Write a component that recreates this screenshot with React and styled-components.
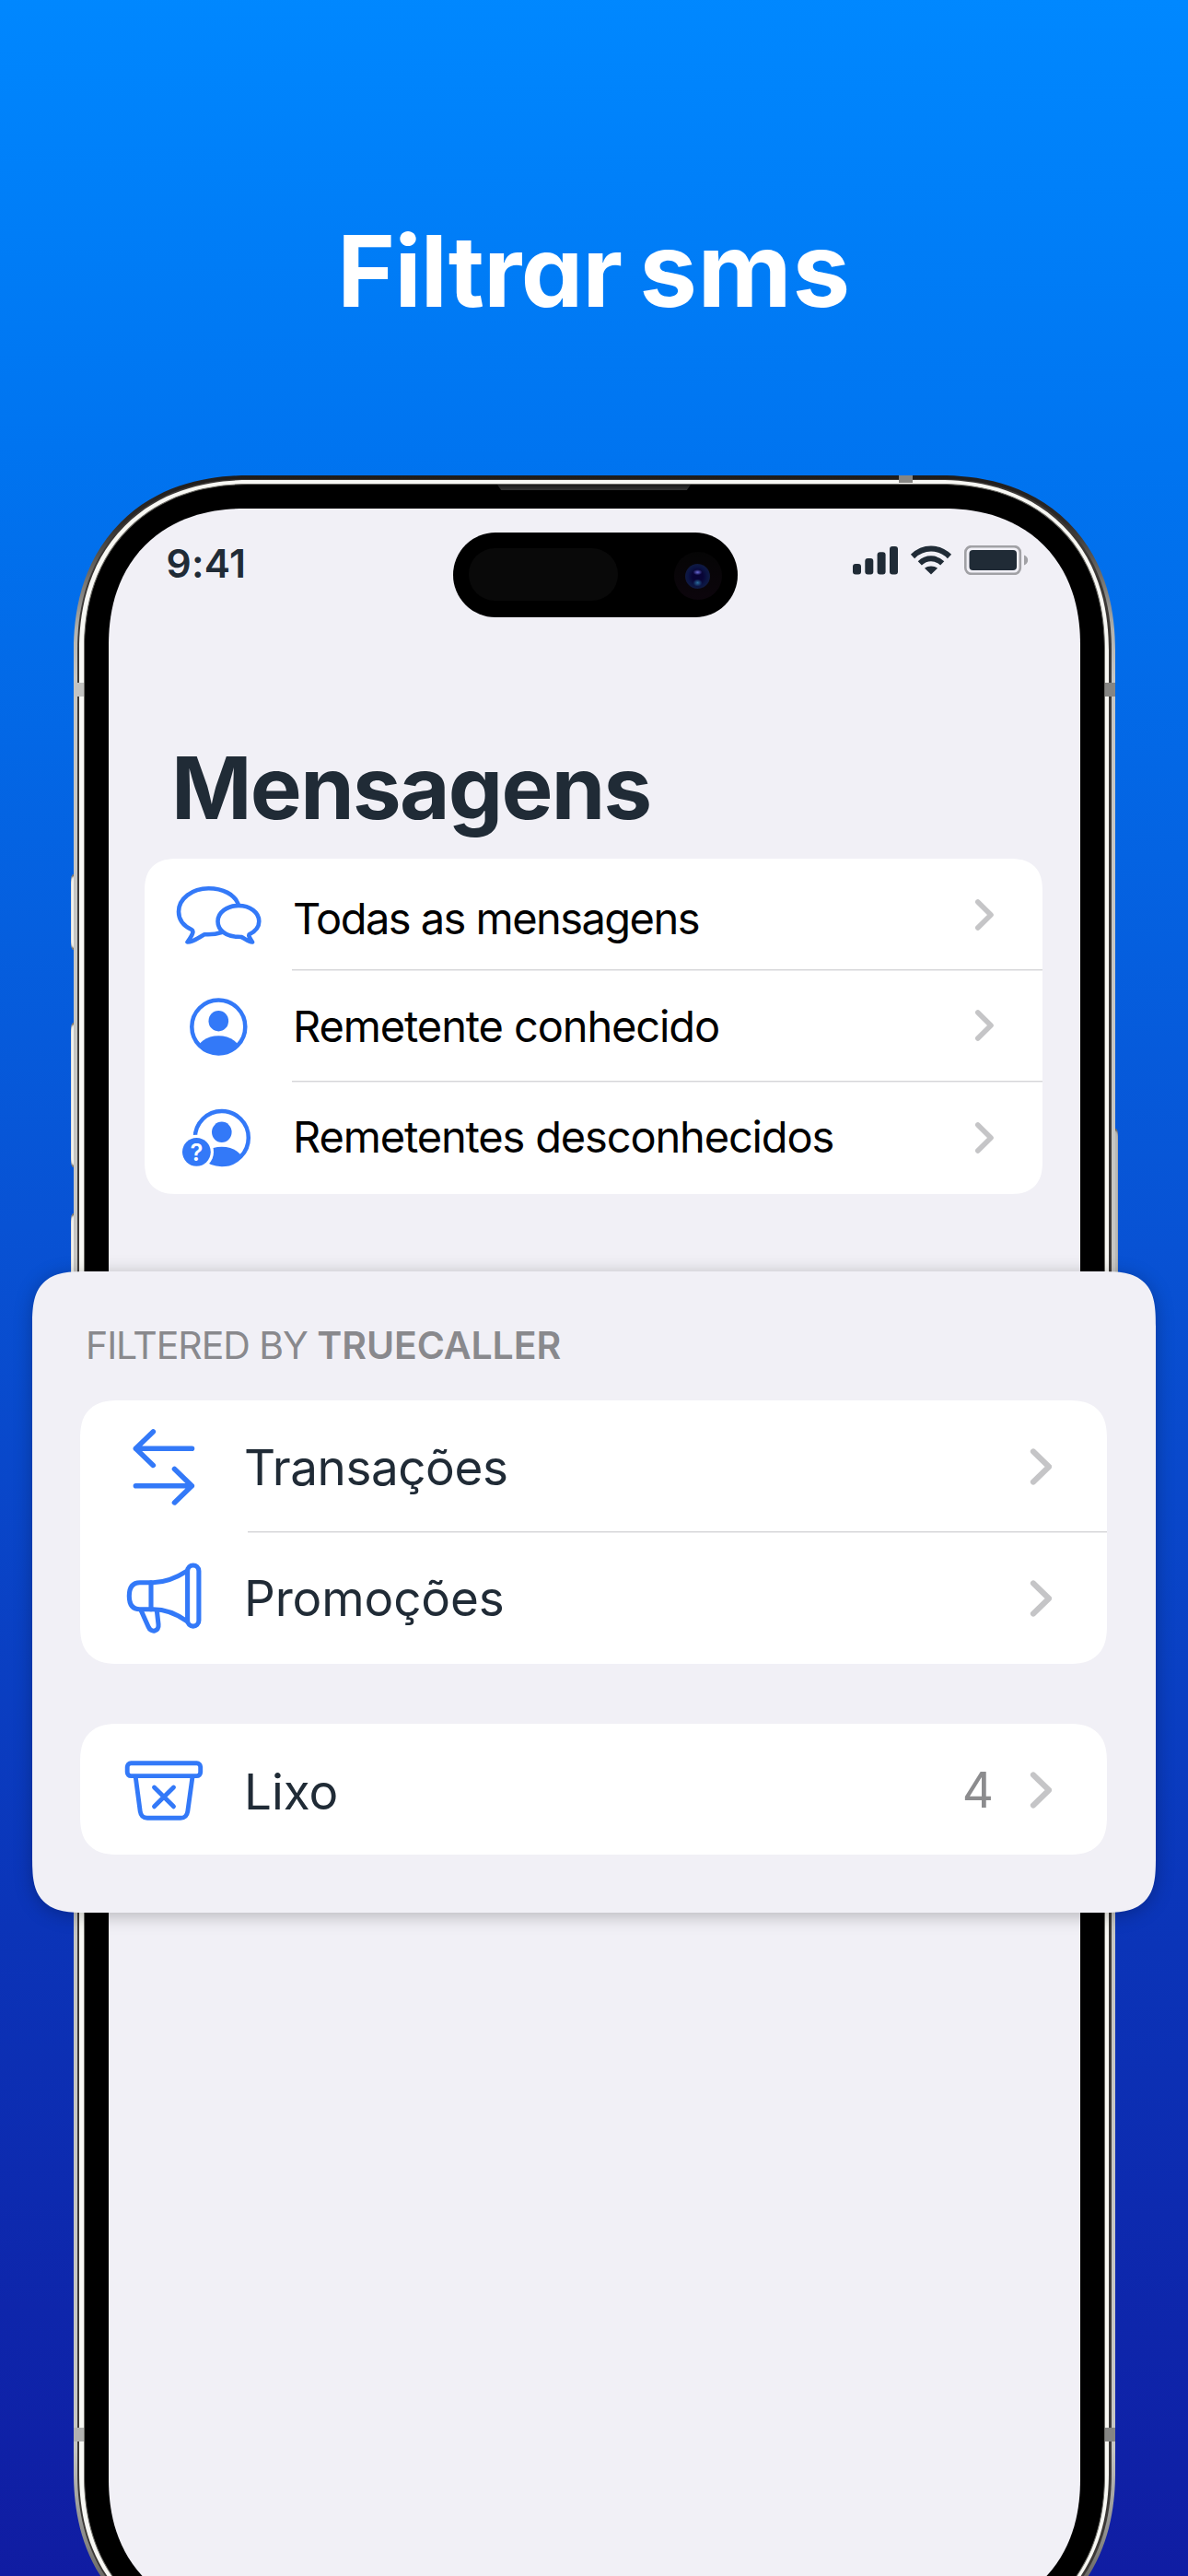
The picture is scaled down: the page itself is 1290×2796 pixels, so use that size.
import React from 'react';
import styled, { createGlobalStyle } from 'styled-components';

const GlobalStyle = createGlobalStyle`
    body {
        margin: 0;
        font-family: Inter, "Liberation Sans", sans-serif;
    }
`;

const Page = styled.div`
    position: relative;
    width: 1290px;
    height: 2796px;
    overflow: hidden;
    background: linear-gradient(181deg, #0088ff 0%, #0074f0 18%, #0852d4 48%, #0b34b8 75%, #101ca2 100%);
`;

const Header = styled.header`
    box-sizing: border-box;
    height: 516px;
    padding-top: 230px;
`;

const Headline = styled.h1`
    margin: 0;
    text-align: center;
    font-size: 107px;
    line-height: 128px;
    font-weight: 700;
    letter-spacing: -0.6px;
    word-spacing: -6px;
    font-feature-settings: "cv11";
    color: #fff;

    span {
        font-size: 112px;
        line-height: 1;
        letter-spacing: 0.6px;
    }
`;

const Phone = styled.div`
    position: relative;
    width: 1131px;
    height: 2358px;
    margin-left: 80px;
`;

const SideButton = styled.div`
    position: absolute;
    top: ${props => props.$top}px;
    ${props => props.$side}: -3px;
    width: 10px;
    height: ${props => props.$height}px;
    border-radius: 3px / 8px;
    background: ${props => (props.$side === 'left' ? '#f1f1ee' : '#b9b9b6')};
    box-shadow: inset 0 3px 2px -1px #55504a, inset 0 -3px 2px -1px #55504a;
`;

const Frame = styled.div`
    position: relative;
    box-sizing: border-box;
    height: 100%;
    padding: 4px;
    border-radius: 190px;
    corner-shape: superellipse(1.15);
    background: linear-gradient(#1f1c1a, #2d2a28 50px, #b4b4b0 170px, #c6c6c3 220px, #c6c6c3 2140px, #8b8b88 2240px, #2d2a28);
`;

const Rim = styled.div`
    box-sizing: border-box;
    height: 100%;
    padding: 1px 3px 1px 2px;
    border-radius: 186px;
    corner-shape: superellipse(1.15);
    background: #3c3937;
`;

const Polish = styled.div`
    box-sizing: border-box;
    height: 100%;
    padding: 3.5px 4px 3.5px 4.5px;
    border-radius: 185px;
    corner-shape: superellipse(1.15);
    background: #f8f8f4;
`;

const Bezel = styled.div`
    box-sizing: border-box;
    height: 100%;
    padding: 26px;
    border: 1px solid #6c6b66;
    border-radius: 180px;
    corner-shape: superellipse(1.15);
    background: #000;
`;

const Speaker = styled.div`
    position: absolute;
    left: 460px;
    top: 10px;
    width: 210px;
    height: 6px;
    background: linear-gradient(#1b1b1b, #333);
    clip-path: polygon(0 0, 100% 0, 98% 100%, 2% 100%);
`;

const Band = styled.div`
    position: absolute;
    left: ${props => props.$left}px;
    top: ${props => props.$top}px;
    width: ${props => (props.$flat ? 15 : 11)}px;
    height: ${props => (props.$flat ? 8 : 15)}px;
    background: ${props => props.$tone};
`;

const Screen = styled.main`
    position: relative;
    height: 100%;
    border-radius: 148px;
    corner-shape: superellipse(1.15);
    background: #f1f0f6;
    overflow: hidden;
`;

const StatusBar = styled.div`
    box-sizing: border-box;
    display: flex;
    justify-content: space-between;
    align-items: center;
    height: 120px;
    padding: 0 55px 0 63px;
    color: #202b36;
`;

const Clock = styled.div`
    font-size: 42.5px;
    font-weight: 580;
    letter-spacing: 0.3px;
`;

const StatusIcons = styled.svg`
    display: block;
    width: 192px;
    height: 32px;
    margin-top: -8px;
`;

const Island = styled.div`
    position: absolute;
    left: 374px;
    top: 26px;
    box-sizing: border-box;
    display: flex;
    justify-content: space-between;
    align-items: center;
    width: 309px;
    height: 92px;
    padding: 0 17px;
    border-radius: 46px;
    background: #000;
`;

const Sensor = styled.div`
    width: 162px;
    height: 57px;
    border-radius: 29px;
    background: #090909;
`;

const Lens = styled.div`
    display: flex;
    justify-content: center;
    align-items: center;
    width: 52px;
    height: 52px;
    margin-top: 3px;
    border-radius: 50%;
    background: linear-gradient(#050505, #0c050c);
`;

const Glass = styled.div`
    width: 27px;
    height: 27px;
    border-radius: 50%;
    background:
        radial-gradient(ellipse 5px 3px at 50% 34%, #6a6ad8, transparent),
        radial-gradient(ellipse 5px 4px at 50% 76%, #2a6d9c, transparent),
        radial-gradient(circle, #080436 0 30%, #0b1544 55%, #17203c 90%);
`;

const Title = styled.h2`
    margin: 126px 0 0 68.5px;
    font-size: 94px;
    line-height: 114px;
    font-weight: 700;
    letter-spacing: -1.7px;
    color: #202b36;
`;

const List = styled.div`
    display: grid;
    grid-template-rows: ${props => props.$rows};
    border-radius: ${props => (props.$large ? 42 : 36)}px;
    corner-shape: superellipse(1.35);
    background: #fff;
    overflow: hidden;
`;

const Inbox = styled(List)`
    margin: 20px 41px 0 39px;
`;

const Row = styled.div`
    display: flex;
`;

const IconCell = styled.div`
    box-sizing: border-box;
    display: flex;
    justify-content: center;
    align-items: center;
    width: ${props => (props.$large ? 182 : 160)}px;
    padding-top: ${props => (props.$large ? 0 : 2)}px;

    svg {
        display: block;
        fill: none;
        stroke: #3379f8;
        stroke-linecap: round;
        stroke-linejoin: round;
    }
`;

const Body = styled.div`
    box-sizing: border-box;
    flex: 1;
    display: flex;
    align-items: center;
    padding: 2px ${props => (props.$large ? 60 : 52)}px 0 0;
    background: ${props => (props.$divided ? 'linear-gradient(#d6d6d8 1px, #ececee 1px 2px, transparent 2px)' : 'none')};
`;

const Label = styled.div`
    flex: 1;
    margin-left: ${props => (props.$large ? -4 : 1.5)}px;
    margin-top: ${props => props.$drop}px;
    font-size: ${props => (props.$large ? 53 : 47)}px;
    letter-spacing: ${props => props.$tracking}px;
    color: ${props => (props.$large ? '#202b36' : '#000')};
`;

const Count = styled.div`
    margin-right: 39px;
    font-size: 53px;
    color: #8c8c8e;
`;

const ChevronSvg = styled.svg`
    display: block;
    fill: none;
    stroke: #c5c5c7;
    stroke-linecap: round;
    stroke-linejoin: round;
`;

const Sheet = styled.section`
    position: absolute;
    left: 35px;
    top: 1380px;
    box-sizing: border-box;
    width: 1220px;
    height: 695.5px;
    padding: 55px 53px 0 52px;
    border-radius: 60px;
    corner-shape: superellipse(1.6);
    background: #f1f0f6;
    box-shadow: 0 3px 20px rgba(0, 0, 0, 0.26);
`;

const SheetTitle = styled.h3`
    margin: 0 0 34.5px 6px;
    font-size: 41px;
    line-height: 50px;
    font-weight: 400;
    letter-spacing: -1.05px;
    color: #89898d;

    strong {
        font-weight: 600;
        letter-spacing: -0.1px;
    }
`;

const Sections = styled.div`
    display: grid;
    gap: 64.5px;
`;

const Chevron = ({large}) => (
    large
        ? (
            <ChevronSvg width="24" height="40" viewBox="0 0 24 40" strokeWidth="6.2">
                <path d="M4 3.5 L21 20 L4 36.5"/>
            </ChevronSvg>
        )
        : (
            <ChevronSvg width="21" height="34" viewBox="0 0 21 34" strokeWidth="5.6">
                <path d="M2.8 3 L17 17 L2.8 31"/>
            </ChevronSvg>
        )
);

const ChatIcon = () => (
    <svg width="96" height="72" viewBox="0 0 96 72" strokeWidth="4.6">
        <path d="M69.5 24 C66 14 53 7.3 37.5 7.3 C19.5 7.3 5 18.5 5 32.5 C5 41 10.5 48 19 52 C22 53.6 20 58 14.5 65.5 C21 65.5 26 61 33 57.2 C40 57.6 46 57 51.5 55"/>
        <path d="M69 59.8 C56.5 59.5 47.5 52.5 47.5 43 C47.5 33.5 57.5 26 70 26 C82.5 26 92.3 33.5 92.3 43 C92.3 49.5 88 54 82 57 C80.3 58 82 61 85 65.5 C80 65.2 77 61.5 73 60 Z"/>
    </svg>
);

const ContactIcon = () => (
    <svg width="96" height="72" viewBox="0 0 96 72" strokeWidth="4.5">
        <clipPath id="contact"><circle cx="48.3" cy="37.5" r="29.5"/></clipPath>
        <circle cx="48.3" cy="37.5" r="29"/>
        <ellipse cx="48.3" cy="31.2" rx="10.8" ry="11.2" fill="#3379f8" stroke="none"/>
        <ellipse cx="48.3" cy="65" rx="24" ry="17.8" fill="#3379f8" stroke="none" clipPath="url(#contact)"/>
    </svg>
);

const UnknownIcon = () => (
    <svg width="96" height="72" viewBox="0 0 96 72" strokeWidth="4.5">
        <clipPath id="unknown"><circle cx="51.8" cy="36" r="29.5"/></clipPath>
        <circle cx="51.8" cy="36" r="29"/>
        <ellipse cx="51.8" cy="29.8" rx="10.8" ry="11.2" fill="#3379f8" stroke="none"/>
        <ellipse cx="51.8" cy="63.5" rx="24" ry="17.8" fill="#3379f8" stroke="none" clipPath="url(#unknown)"/>
        <circle cx="24.4" cy="51.3" r="18.6" fill="#fff" stroke="none"/>
        <circle cx="24.4" cy="51.3" r="15.4" fill="#3379f8" stroke="none"/>
        <text x="24.4" y="60.5" textAnchor="middle" fontSize="25.5" fontWeight="600" fill="#fff" stroke="none">?</text>
    </svg>
);

const TransferIcon = () => (
    <svg width="96" height="96" viewBox="0 0 96 96" strokeWidth="5.6">
        <path d="M36.3 11 L17.4 29.2 L36.3 47.4 M17.4 29.2 H78.5"/>
        <path d="M59.5 51.5 L78.3 69.7 L59.5 87.9 M17.4 69.7 H78.3"/>
    </svg>
);

const MegaphoneIcon = () => (
    <svg width="96" height="96" viewBox="0 0 96 96" strokeWidth="5.1">
        <path d="M73.6 20 V19.3 C73.6 10.8 85.9 10.8 85.9 19.3 V72.7 C85.9 81.2 73.6 81.2 73.6 72.7 Z"/>
        <path d="M72.7 19.4 C62 26.3 49 31.7 36 31.7 H22 C14 31.7 10.3 37 10.3 46.2 C10.3 55.4 14 60.7 22 60.7 H36 C49 60.7 63 66.5 72.7 73.5"/>
        <path d="M34 31.7 V60.7"/>
        <path d="M23.3 62.3 L31 79.5 C34 87 43 85 42 77 L40.3 61.8"/>
    </svg>
);

const TrashIcon = () => (
    <svg width="96" height="96" viewBox="0 0 96 96" strokeWidth="4.9">
        <rect x="8.2" y="19.8" width="79.5" height="13.8" rx="4"/>
        <path d="M17.2 34.5 L22.2 72 Q23.3 79.3 30 79.3 H66 Q72.7 79.3 73.8 72 L79 34.5"/>
        <path d="M37.5 46 L58.5 66.8 M58.5 46 L37.5 66.8"/>
    </svg>
);

const Signals = () => (
    <StatusIcons viewBox="0 0 192 32">
        <g fill="#202b36">
            <rect x="0" y="20" width="9" height="11.5" rx="3"/>
            <rect x="13.3" y="14" width="9" height="17.5" rx="3"/>
            <rect x="26.6" y="7.3" width="9" height="24.2" rx="3"/>
            <rect x="40" y="1" width="9" height="30.5" rx="3"/>
            <path d="M85 31.6 L78 24.8 C82 21.6 88 21.6 92 24.8 Z"/>
        </g>
        <g fill="none" stroke="#202b36" strokeWidth="6">
            <path d="M65 12 C76.5 0.8 93.5 0.8 105 12"/>
            <path d="M72.8 19.4 C80 12.6 90 12.6 97.2 19.4"/>
        </g>
        <rect x="122.3" y="1.1" width="59.5" height="29.8" rx="6.5" fill="none" stroke="#a1a1a5" strokeWidth="2.6"/>
        <rect x="126.5" y="5" width="51.5" height="22" rx="4" fill="#202b36"/>
        <path d="M186 10.5 C191.5 12.5 191.5 19.5 186 21.5 Z" fill="#a1a1a5"/>
    </StatusIcons>
);

const ListRow = ({icon, label, large, divided, drop, tracking, count}) => (
    <Row>
        <IconCell $large={large}>{icon}</IconCell>
        <Body $large={large} $divided={divided}>
            <Label $large={large} $drop={drop} $tracking={tracking}>{label}</Label>
            {count && <Count>{count}</Count>}
            <Chevron large={large}/>
        </Body>
    </Row>
);

const App = () => (
    <Page>
        <GlobalStyle/>
        <Header>
            <Headline>Filtrar <span>sms</span></Headline>
        </Header>
        <Phone>
            <SideButton $side="left" $top={433} $height={82}/>
            <SideButton $side="left" $top={594} $height={157}/>
            <SideButton $side="left" $top={801} $height={157}/>
            <SideButton $side="right" $top={709} $height={262}/>
            <Frame>
                <Rim>
                    <Polish>
                        <Bezel>
                            <Screen>
                                <StatusBar>
                                    <Clock>9:41</Clock>
                                    <Signals/>
                                </StatusBar>
                                <Island>
                                    <Sensor/>
                                    <Lens><Glass/></Lens>
                                </Island>
                                <Title>Mensagens</Title>
                                <Inbox $rows="120px 121px 123px">
                                    <ListRow icon={<ChatIcon/>} label="Todas as mensagens" drop={7} tracking={-1.55}/>
                                    <ListRow icon={<ContactIcon/>} label="Remetente conhecido" divided drop={1} tracking={-1.12}/>
                                    <ListRow icon={<UnknownIcon/>} label="Remetentes desconhecidos" divided drop={-4} tracking={-1.16}/>
                                </Inbox>
                            </Screen>
                        </Bezel>
                    </Polish>
                </Rim>
                <Speaker/>
                <Band $left={0} $top={225} $tone="#c3c3c1"/>
                <Band $left={1120} $top={225} $tone="#858583"/>
                <Band $left={0} $top={2119} $tone="#b2b2b0"/>
                <Band $left={1120} $top={2119} $tone="#858583"/>
                <Band $left={896} $top={0} $flat $tone="#868582"/>
            </Frame>
        </Phone>
        <Sheet>
            <SheetTitle>FILTERED BY <strong>TRUECALLER</strong></SheetTitle>
            <Sections>
                <List $large $rows="142px 144.5px">
                    <ListRow large icon={<TransferIcon/>} label="Transações" drop={2} tracking={-0.45}/>
                    <ListRow large icon={<MegaphoneIcon/>} label="Promoções" divided drop={0} tracking={-0.15}/>
                </List>
                <List $large $rows="142.5px">
                    <ListRow large icon={<TrashIcon/>} label="Lixo" drop={4} tracking={0} count="4"/>
                </List>
            </Sections>
        </Sheet>
    </Page>
);

export default App;
